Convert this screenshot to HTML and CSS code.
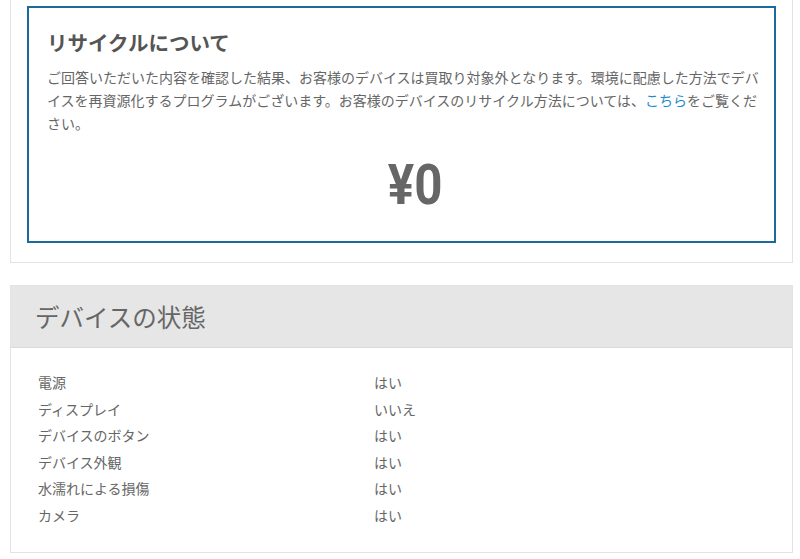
FILE: index.html
```html
<!DOCTYPE html>
<html>
<head>
  <meta charset="utf-8">
  <title>査定結果</title>
  <link rel="stylesheet" href="styles.css">
</head>
<body>
  <div class="page">
    <div class="card result-card">
      <div class="recycle-box">
        <h2 class="recycle-title">リサイクルについて</h2>
        <p class="recycle-text">ご回答いただいた内容を確認した結果、お客様のデバイスは買取り対象外となります。環境に配慮した方法でデバイスを再資源化するプログラムがございます。お客様のデバイスのリサイクル方法については、<a href="#">こちら</a>をご覧ください。</p>
        <div class="price"><span>¥0</span></div>
      </div>
    </div>

    <div class="card status-card">
      <div class="card-header">
        <h3>デバイスの状態</h3>
      </div>
      <div class="status-list">
        <span class="label">電源</span><span class="value">はい</span>
        <span class="label">ディスプレイ</span><span class="value">いいえ</span>
        <span class="label">デバイスのボタン</span><span class="value">はい</span>
        <span class="label">デバイス外観</span><span class="value">はい</span>
        <span class="label">水濡れによる損傷</span><span class="value">はい</span>
        <span class="label">カメラ</span><span class="value">はい</span>
      </div>
    </div>
  </div>
</body>
</html>
```

FILE: styles.css
```css
* {box-sizing: border-box}
body {
  margin: 0;
  background: #fff;
  color: #666;
  font-family: "Noto Sans CJK JP", "Noto Sans", sans-serif;
}
.page {padding: 0 7px 0 10px;}

.card {
  border: 1px solid #e3e3e3;
  background: #fff;
}
.result-card {
  border-top: none;
  padding: 6px 16px 19px 16px;
}
.recycle-box {
  border: 2px solid #1b6a9c;
  padding: 20px 12px 27px 18px;
}
.recycle-title {
  margin: 0;
  font-size: 20.5px;
  line-height: 28px;
  font-weight: bold;
  color: #555;
}
.recycle-text {
  margin: 10px 0 0 0;
  font-size: 14px;
  line-height: 23px;
}
.recycle-text a {
  color: #1e8bd0;
  text-decoration: none;
}
.price {
  margin-top: 21px;
  padding-left: 22px;
  text-align: center;
  font-family: Roboto, "Liberation Sans", sans-serif;
  font-weight: bold;
  font-size: 56px;
  line-height: 58px;
  color: #666;
}
.price span {
  display: inline-block;
  transform: scaleX(0.88);
}

.status-card {margin-top: 22px;}
.card-header {
  background: #e6e6e6;
  border-bottom: 1px solid #d9d9d9;
  height: 62px;
  padding: 0 24px;
  display: flex;
  align-items: center;
}
.card-header h3 {
  margin: 0;
  font-size: 24.5px;
  font-weight: normal;
  color: #666;
}
.status-list {
  display: grid;
  grid-template-columns: 336px 1fr;
  padding: 21px 27px 24px 27px;
  font-size: 14px;
  line-height: 26.5px;
}
```
